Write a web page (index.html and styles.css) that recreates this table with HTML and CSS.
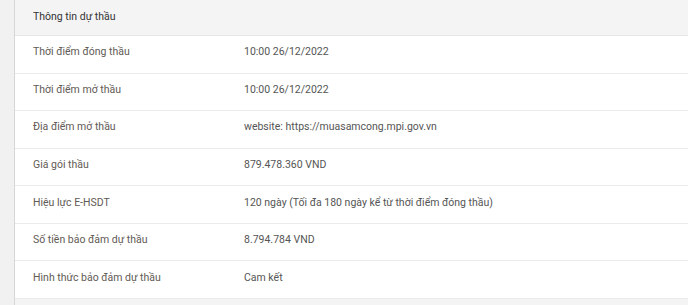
FILE: index.html
```html
<!DOCTYPE html>
<html lang="vi">
<head>
<meta charset="utf-8">
<link rel="stylesheet" href="styles.css">
</head>
<body>
<div class="page">
  <div class="side"></div>
  <div class="panel">
    <div class="head">Thông tin dự thầu</div>
    <div class="row"><div class="label">Thời điểm đóng thầu</div><div class="value">10:00 26/12/2022</div></div>
    <div class="row"><div class="label">Thời điểm mở thầu</div><div class="value">10:00 26/12/2022</div></div>
    <div class="row"><div class="label">Địa điểm mở thầu</div><div class="value">website: https://muasamcong.mpi.gov.vn</div></div>
    <div class="row"><div class="label">Giá gói thầu</div><div class="value">879.478.360 VND</div></div>
    <div class="row"><div class="label">Hiệu lực E-HSDT</div><div class="value">120 ngày (Tối đa 180 ngày kể từ thời điểm đóng thầu)</div></div>
    <div class="row"><div class="label">Số tiền bảo đảm dự thầu</div><div class="value">8.794.784 VND</div></div>
    <div class="row"><div class="label">Hình thức bảo đảm dự thầu</div><div class="value">Cam kết</div></div>
    <div class="foot"></div>
  </div>
</div>
</body>
</html>
```

FILE: styles.css
```css
html, body {
  margin: 0;
  padding: 0;
  background: #f4f4f4;
}
body {
  font-family: Roboto, "Noto Sans", sans-serif;
  font-size: 10.5px;
  color: #555;
}
.page {
  display: flex;
  height: 305px;
  overflow: hidden;
}
.side {
  width: 14px;
  flex: none;
  background: #f1f1f1;
  border-right: 1px solid #d6d6d6;
}
.panel {
  flex: 1;
  display: flex;
  flex-direction: column;
  background: #fff;
}
.head {
  height: 36px;
  box-sizing: border-box;
  border-bottom: 1px solid #e6e6e6;
  background: #f4f4f4;
  color: #333;
  padding-left: 18px;
  display: flex;
  align-items: center;
  padding-bottom: 2px;
}
.row {
  height: 37.57px;
  box-sizing: border-box;
  border-bottom: 1px solid #ebebeb;
  display: flex;
  align-items: center;
  padding-left: 18px;
  padding-bottom: 5px;
}
.label {
  width: 211px;
  flex: none;
  color: #625a55;
}
.value {
  color: #555;
}
.foot {
  flex: 1;
  background: #f4f4f4;
}
```
